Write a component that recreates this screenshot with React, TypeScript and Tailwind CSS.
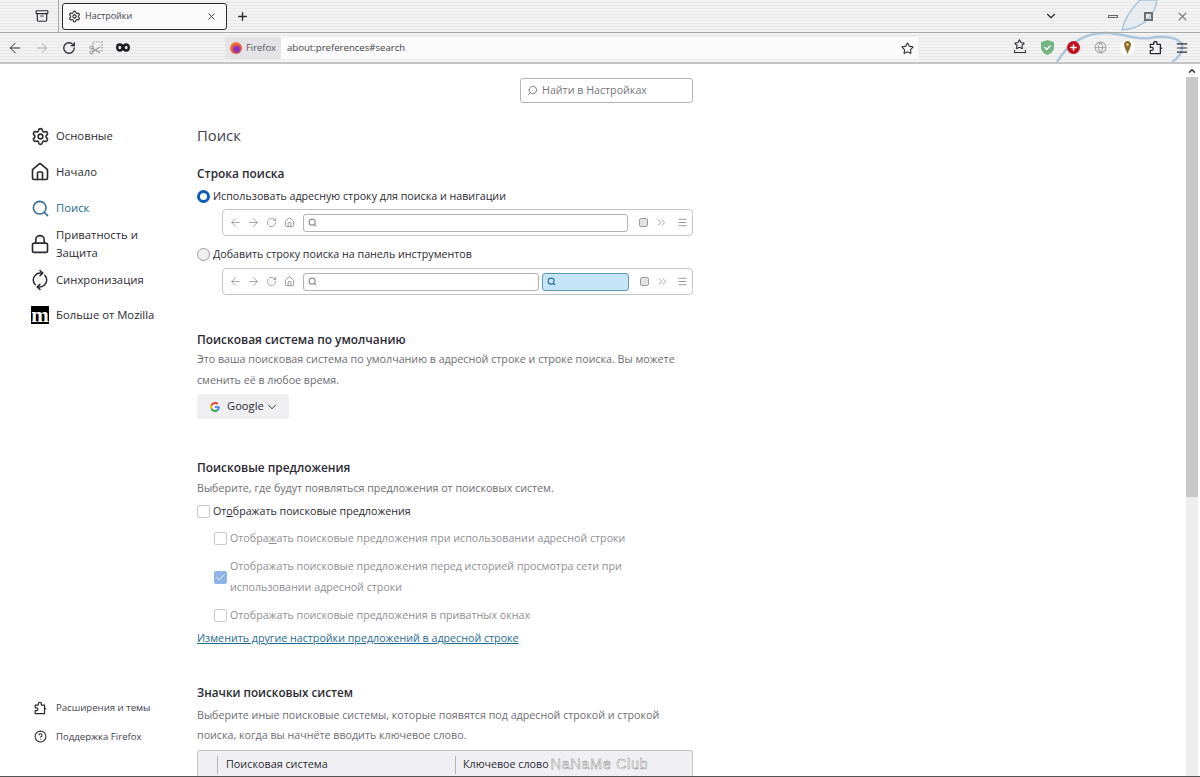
import { ArrowLeft, ArrowRight, Check, ChevronDown, ChevronUp, ChevronsRight, CircleHelp, Globe, House, Lock, Menu, Plus, RotateCw, Search, Settings, Star, X, RefreshCw, Archive } from 'lucide-react'

function PuzzleIcon({ className }: { className?: string }) {
  return (
    <svg className={className} viewBox="0 0 16 16" fill="none" stroke="currentColor" strokeWidth="1.4" strokeLinejoin="round">
      <path d="M2.5 14.5V11H4a1.6 1.6 0 0 0 0-3.2H2.5V4.6H6V3.4a1.8 1.8 0 0 1 3.6 0v1.2h3.6v4.2h1.3v0h-1.3v5.7z" />
    </svg>
  )
}

function MiniToolbar({ withSearch }: { withSearch?: boolean }) {
  return (
    <div className="ml-[25px] flex h-[27px] w-[471px] items-center rounded-[4px] border border-[#c4c4c8] pl-[3px] pr-[4px]">
      <div className="flex w-[18px] justify-center"><ArrowLeft className="h-[13px] w-[13px] text-[#8f8f96]" strokeWidth={1.5} /></div>
      <div className="flex w-[18px] justify-center"><ArrowRight className="h-[13px] w-[13px] text-[#8f8f96]" strokeWidth={1.5} /></div>
      <div className="flex w-[18px] justify-center"><RotateCw className="h-[11px] w-[11px] text-[#8f8f96]" strokeWidth={1.7} /></div>
      <div className="flex w-[18px] justify-center"><House className="h-[11px] w-[11px] text-[#8f8f96]" /></div>
      <div className={`ml-[5px] flex h-[18px] items-center rounded-[3px] border border-[#b1b1b7] pl-[4px] ${withSearch ? 'w-[236px]' : 'w-[325px]'}`}>
        <Search className="h-[9px] w-[9px] text-[#8f8f96]" strokeWidth={3} />
      </div>
      {withSearch && (
        <div className="ml-[3px] flex h-[18px] w-[87px] items-center rounded-[3px] border border-[#5f9bb5] bg-[#c5e4f8] pl-[4px]">
          <Search className="h-[9px] w-[9px] text-[#2f6f8f]" strokeWidth={3} />
        </div>
      )}
      <div className="ml-[11px] h-[9px] w-[9px] rounded-[2px] border border-[#9a9aa0] bg-[#e4e4e6]" />
      <ChevronsRight className="ml-[7px] h-[13px] w-[13px] text-[#8f8f96]" strokeWidth={1.5} />
      <Menu className="ml-auto h-[11px] w-[11px] text-[#8f8f96]" />
    </div>
  )
}

function Checkbox({ checked }: { checked?: boolean }) {
  return (
    <div className={`flex h-[13px] w-[13px] shrink-0 items-center justify-center rounded-[2px] border ${checked ? 'border-[#8db4e8] bg-[#8db4e8]' : 'border-[#c8c8cc] bg-white'}`}>
      {checked && <Check className="h-[11px] w-[11px] text-white" strokeWidth={2} />}
    </div>
  )
}

function NavItem({ icon, label, active, className }: { icon: React.ReactNode; label: string; active?: boolean; className?: string }) {
  return (
    <div className={`flex items-center ${className ?? ''}`}>
      <div className="flex w-[24px] shrink-0 justify-center">{icon}</div>
      <span className={`ml-[4px] w-[105px] text-[11.3px] leading-[18px] ${active ? 'text-[#1d6a92]' : 'text-[#2b2a33]'}`}>{label}</span>
    </div>
  )
}

export default function App() {
  return (
    <div className="flex h-[777px] w-[1200px] flex-col overflow-hidden bg-white font-['Open_Sans','Noto_Sans',sans-serif] text-[#2b2a33]">
      {/* Browser chrome */}
      <div className="relative h-[64px] shrink-0 border-b-2 border-[#c4c4c4] bg-[#f0f0f0] bg-[repeating-linear-gradient(0deg,#f2f2f2_0px,#f2f2f2_2px,#e9e9e9_2px,#e9e9e9_3px)]">
        <svg className="absolute left-[1040px] top-0 h-[62px] w-[160px]" viewBox="0 0 160 62" fill="none" stroke="#a9c6de" strokeWidth="2.5">
          <path d="M82 30 C85 15 95 5 100 0 H117 C115 15 105 28 82 30 Z" fill="#dbe7f0" fillOpacity="0.45" strokeWidth="1.5" />
          <path d="M17 62 C30 40 50 32 67 33 C85 34 95 40 110 38 C125 35 140 38 142 45 C143 52 138 58 132 62" />
        </svg>
        {/* Tab strip */}
        <div className="relative flex h-[33px] items-center border-b border-[#a8a8a8]">
          <Archive className="ml-[35px] h-[14px] w-[14px] text-[#2b2a33]" />
          <div className="ml-[9px] h-[33px] w-px bg-[#a8a8a8]" />
          <div className="ml-[3px] flex h-[27px] w-[165px] items-center rounded-[3px] border border-[#2b2a33] bg-[#fafafa] pl-[5px] pr-[9px]">
            <Settings className="h-[13px] w-[13px]" />
            <span className="ml-[4px] text-[9px] text-[#42414d]">Настройки</span>
            <X className="ml-auto h-[11px] w-[11px]" />
          </div>
          <Plus className="ml-[9px] h-[13px] w-[13px]" strokeWidth={2.4} />
          <ChevronDown className="absolute left-[1044px] top-[9px] h-[14px] w-[14px]" />
          <div className="absolute left-[1108px] top-[15px] h-[3px] w-[10px] border border-[#666] bg-[#eee]" />
          <div className="absolute left-[1144px] top-[12px] flex h-[9px] w-[9px] items-center justify-center border-2 border-[#6e6e6e]" />
          <X className="absolute left-[1176px] top-[10px] h-[13px] w-[13px] text-[#888]" strokeWidth={2.5} />
        </div>
        {/* Nav bar */}
        <div className="relative flex h-[29px] items-center pl-[1px]">
          <div className="flex w-[27px] justify-center"><ArrowLeft className="h-[16px] w-[16px]" strokeWidth={1.5} /></div>
          <div className="flex w-[27px] justify-center"><ArrowRight className="h-[16px] w-[16px] text-[#a8a8a8]" strokeWidth={1.5} /></div>
          <div className="flex w-[27px] justify-center"><RotateCw className="h-[14px] w-[14px]" strokeWidth={2.2} /></div>
          <div className="flex w-[27px] justify-center">
            <svg className="h-[14px] w-[14px] text-[#9a9a9a]" viewBox="0 0 14 14" fill="none" stroke="currentColor" strokeWidth="1.2">
              <rect x="4" y="1" width="9" height="9" strokeDasharray="1.5 1.3" />
              <circle cx="2.5" cy="6.5" r="1.5" />
              <circle cx="2.5" cy="11.5" r="1.5" />
              <path d="M4 7.5l7 4.5M4 10.5l7-4.5" />
            </svg>
          </div>
          <div className="flex w-[27px] justify-center">
            <svg className="h-[9px] w-[14px] text-[#1c1b22]" viewBox="0 0 14 9" fill="none" stroke="currentColor" strokeWidth="2.4">
              <ellipse cx="3.8" cy="4.5" rx="2.6" ry="3" />
              <ellipse cx="10.2" cy="4.5" rx="2.6" ry="3" />
            </svg>
          </div>
          <div className="absolute left-[225px] top-[4px] flex h-[22px] w-[693px] items-center bg-[#fbfbfb]">
            <div className="flex h-[22px] w-[56px] items-center bg-[#e4e4e6] pl-[5px]">
              <div className="h-[12px] w-[12px] rounded-full bg-[radial-gradient(circle_at_55%_60%,#8a2fc0_22%,#f0603a_50%,#ffa830)]" />
              <span className="ml-[4px] text-[9.4px] text-[#55545c]">Firefox</span>
            </div>
            <span className="ml-[6px] text-[9.6px] text-[#42414d]">about:preferences#search</span>
            <Star className="ml-auto mr-[4px] h-[13px] w-[13px]" />
          </div>
          <Star className="absolute left-[1014px] top-[6px] h-[11px] w-[11px]" strokeWidth={2.4} />
          <div className="absolute left-[1014px] top-[17px] h-[3px] w-[12px] border-x border-b border-[#2b2a33]" />
          <svg className="absolute left-[1041px] top-[7px] h-[15px] w-[13px]" viewBox="0 0 13 15">
            <path d="M6.5 0L13 2.2V7.5C13 11 10 13.6 6.5 15C3 13.6 0 11 0 7.5V2.2z" fill="#73b57f" />
            <path d="M3.5 7.2l2.2 2.2 3.8-4" fill="none" stroke="#fff" strokeWidth="1.5" />
          </svg>
          <div className="absolute left-[1067px] top-[8px] flex h-[13px] w-[13px] items-center justify-center rounded-full bg-[#c4101a]">
            <Plus className="h-[9px] w-[9px] text-white" strokeWidth={4} />
          </div>
          <Globe className="absolute left-[1094px] top-[8px] h-[13px] w-[13px] text-[#a8a8ac]" />
          <div className="absolute left-[1120px] top-[7px] flex h-[15px] w-[15px] items-center justify-center rounded-full bg-white">
            <svg className="h-[13px] w-[7px]" viewBox="0 0 7 13">
              <path d="M3.5 0C1.5 0 0 1.5 0 3.5C0 6 2.5 10 3.5 13C4.5 10 7 6 7 3.5C7 1.5 5.5 0 3.5 0Z" fill="#8f6c2e" />
              <circle cx="3.5" cy="3.5" r="1.3" fill="#f0d890" />
            </svg>
          </div>
          <PuzzleIcon className="absolute left-[1148px] top-[7px] h-[15px] w-[15px]" />
          <Menu className="absolute left-[1175px] top-[8px] h-[14px] w-[14px]" />
        </div>
      </div>

      {/* Preferences page */}
      <div className="flex min-h-0 flex-1">
        {/* Sidebar */}
        <div className="flex w-[197px] shrink-0 flex-col pb-[32px] pl-[28px] pt-[60px]">
          <NavItem className="h-[24px]" icon={<Settings className="h-[19px] w-[19px]" />} label="Основные" />
          <NavItem className="mt-[12px] h-[24px]" icon={<House className="h-[20px] w-[20px]" />} label="Начало" />
          <NavItem className="mt-[12px] h-[24px]" active icon={<Search className="h-[19px] w-[19px] text-[#2f6f96]" />} label="Поиск" />
          <NavItem className="mt-[5px] h-[38px]" icon={<Lock className="h-[20px] w-[20px]" />} label="Приватность и Защита" />
          <NavItem className="mt-[5px] h-[24px]" icon={<RefreshCw className="h-[18px] w-[18px] -rotate-45" />} label="Синхронизация" />
          <NavItem
            className="mt-[11px] h-[24px]"
            icon={<div className="flex h-[18px] w-[18px] items-center justify-center bg-black font-['Liberation_Serif',serif] text-[21px] font-bold leading-[14px] text-white">m</div>}
            label="Больше от Mozilla"
          />
          <div className="mt-auto flex items-center">
            <div className="flex w-[24px] justify-center"><PuzzleIcon className="h-[14px] w-[14px]" /></div>
            <span className="ml-[4px] text-[9.6px] text-[#42414d]">Расширения и темы</span>
          </div>
          <div className="mt-[14px] flex items-center">
            <div className="flex w-[24px] justify-center"><CircleHelp className="h-[13px] w-[13px]" /></div>
            <span className="ml-[4px] text-[9.6px] text-[#42414d]">Поддержка Firefox</span>
          </div>
        </div>

        {/* Main column */}
        <div className="w-[496px] shrink-0 overflow-hidden">
          <div className="mt-[14px] flex justify-end">
            <div className="flex h-[25px] w-[173px] items-center rounded-[3px] border border-[#b4b4b8] pl-[6px]">
              <Search className="h-[11px] w-[11px] -scale-x-100 text-[#77767c]" />
              <span className="ml-[4px] text-[10.7px] text-[#77767c]">Найти в Настройках</span>
            </div>
          </div>
          <h1 className="mt-[20px] text-[14.8px] font-normal leading-[24px] text-[#42414d]">Поиск</h1>

          <h2 className="mt-[16px] text-[11.9px] font-semibold leading-[20px]">Строка поиска</h2>
          <div className="mt-[3px] flex h-[20px] items-center">
            <div className="h-[13px] w-[13px] rounded-full border-[3.5px] border-[#0c5cb8] bg-white" />
            <span className="ml-[3px] text-[10.7px]">Использовать адресную строку для поиска и навигации</span>
          </div>
          <div className="mt-[3px]"><MiniToolbar /></div>
          <div className="mt-[8px] flex h-[20px] items-center">
            <div className="h-[13px] w-[13px] rounded-full border border-[#9a9a9e] bg-[#f0f0f0]" />
            <span className="ml-[3px] text-[10.7px]">Добавить строку поиска на панель инструментов</span>
          </div>
          <div className="mt-[4px]"><MiniToolbar withSearch /></div>

          <h2 className="mt-[34px] text-[11.9px] font-semibold leading-[20px]">Поисковая система по умолчанию</h2>
          <p className="text-[10.7px] leading-[21px] text-[#6d6c74]">Это ваша поисковая система по умолчанию в адресной строке и строке поиска. Вы можете сменить её в любое время.</p>
          <div className="mt-[3px] flex h-[25px] w-[92px] items-center rounded-[3px] bg-[#efeff1] pl-[13px]">
            <svg className="h-[10px] w-[10px]" viewBox="0 0 48 48">
              <path fill="#EA4335" d="M24 9.5c3.5 0 6.7 1.2 9.2 3.6l6.9-6.9C35.9 2.4 30.5 0 24 0 14.6 0 6.5 5.4 2.6 13.2l8 6.2C12.4 13.7 17.7 9.5 24 9.5z" />
              <path fill="#4285F4" d="M46.9 24.5c0-1.6-.1-3.1-.4-4.5H24v9h12.9c-.6 3-2.2 5.5-4.8 7.2l7.7 6c4.5-4.2 7.1-10.3 7.1-17.7z" />
              <path fill="#FBBC05" d="M10.5 28.6c-.5-1.4-.8-3-.8-4.6s.3-3.2.8-4.6l-8-6.2C.9 16.5 0 20.1 0 24s.9 7.5 2.6 10.8l7.9-6.2z" />
              <path fill="#34A853" d="M24 48c6.5 0 11.9-2.1 15.9-5.8l-7.7-6c-2.1 1.4-4.9 2.3-8.2 2.3-6.3 0-11.6-4.2-13.5-9.9l-8 6.2C6.5 42.6 14.6 48 24 48z" />
            </svg>
            <span className="ml-[7px] text-[11.2px]">Google</span>
            <ChevronDown className="ml-[1px] h-[14px] w-[14px]" strokeWidth={1.6} />
          </div>

          <h2 className="mt-[38px] text-[11.9px] font-semibold leading-[20px]">Поисковые предложения</h2>
          <p className="mt-[1px] text-[10.7px] leading-[20px] text-[#6d6c74]">Выберите, где будут появляться предложения от поисковых систем.</p>
          <div className="mt-[3px] flex h-[20px] items-center">
            <Checkbox />
            <span className="ml-[3px] text-[10.7px]">От<u>о</u>бражать поисковые предложения</span>
          </div>
          <div className="mt-[7px] flex h-[20px] items-center pl-[17px]">
            <Checkbox />
            <span className="ml-[3px] text-[10.7px] text-[#8f8e94]">Отобра<u>ж</u>ать поисковые предложения при использовании адресной строки</span>
          </div>
          <div className="mt-[8px] flex items-center pl-[17px]">
            <Checkbox checked />
            <span className="ml-[3px] text-[10.7px] leading-[21px] text-[#8f8e94]">Отображать поисковые предложения перед историей просмотра сети при использовании адресной строки</span>
          </div>
          <div className="mt-[7px] flex h-[20px] items-center pl-[17px]">
            <Checkbox />
            <span className="ml-[3px] text-[10.7px] text-[#8f8e94]">Отображать поисковые предложения в приватных окнах</span>
          </div>
          <a className="mt-[3px] block text-[10.7px] leading-[20px] text-[#1d6a92] underline">Изменить другие настройки предложений в адресной строке</a>

          <h2 className="mt-[34px] text-[11.7px] font-semibold leading-[20px]">Значки поисковых систем</h2>
          <p className="mt-[3px] text-[10.7px] leading-[20px] text-[#6d6c74]">Выберите иные поисковые системы, которые появятся под адресной строкой и строкой поиска, когда вы начнёте вводить ключевое слово.</p>
          <div className="mt-[5px] flex h-[26px] items-center rounded-t-[3px] border border-b-0 border-[#c4c4c8] bg-[#f0f0f2] pt-[2px] text-[10.8px]">
            <div className="ml-[19px] h-[18px] w-px bg-[#b4b4b8]" />
            <span className="ml-[8px] w-[229px]">Поисковая система</span>
            <div className="h-[18px] w-px bg-[#b4b4b8]" />
            <span className="ml-[7px] text-[10.7px]">Ключевое слово</span>
            <span className="ml-[2px] font-['Liberation_Sans',sans-serif] text-[14.5px] tracking-[0.6px] text-white [-webkit-text-stroke:0.4px_#777777]">NaNaMe Club</span>
          </div>
        </div>

        {/* Scrollbar */}
        <div className="ml-auto flex w-[14px] flex-col pr-[2px]">
          <div className="flex h-[13px] items-center justify-center bg-white">
            <ChevronUp className="h-[10px] w-[10px]" strokeWidth={3.5} />
          </div>
          <div className="h-[420px] w-full bg-[#c8c8c8]" />
          <div className="flex-1 bg-[#efefef]" />
        </div>
      </div>
      <div className="h-px shrink-0 bg-[#555]" />
    </div>
  )
}
